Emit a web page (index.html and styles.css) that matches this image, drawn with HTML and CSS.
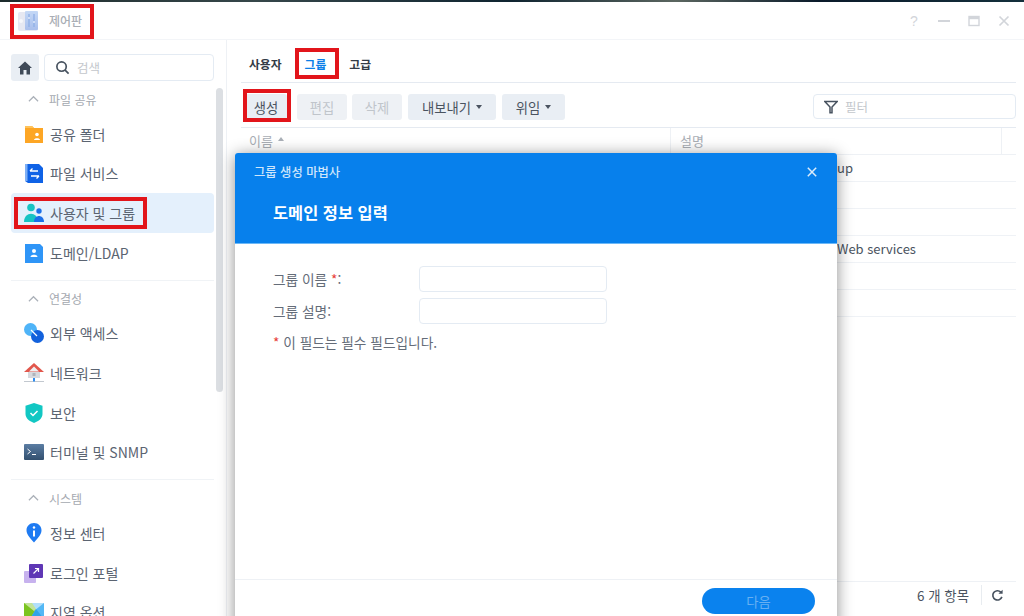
FILE: index.html
```html
<!DOCTYPE html>
<html lang="ko">
<head>
<meta charset="utf-8">
<title>제어판</title>
<link rel="stylesheet" href="styles.css">
</head>
<body>
<div class="desktop-strip"></div>
<div class="window">
  <header class="titlebar">
    <div class="app-title">
      <svg class="app-icon" viewBox="0 0 22 22"><defs><linearGradient id="ti" x1="0" y1="0" x2="0" y2="1"><stop offset="0" stop-color="#c4d8f6"/><stop offset="1" stop-color="#a9bfec"/></linearGradient></defs><rect x="1" y="2" width="20" height="19" rx="2" fill="#e6e8f2"/><rect x="8" y="1" width="13" height="19" rx="1" fill="url(#ti)"/><path d="M12 4v13M17 4v13" stroke="#8fb0e6" stroke-width="1.300"/><path d="M11 8h2M16 12h2" stroke="#dfe9fa" stroke-width="1.300"/><circle cx="4" cy="11" r="2" fill="#f6f7fb"/></svg>
      <span>제어판</span>
    </div>
    <div class="win-controls">
      <span class="win-help">?</span>
      <svg viewBox="0 0 12 12"><path d="M0 6h12" stroke="#d2d5da" stroke-width="2"/></svg>
      <svg viewBox="0 0 12 12"><rect x="1" y="1.500" width="10" height="9" fill="none" stroke="#d2d5da" stroke-width="1.400"/><path d="M1 3h10" stroke="#d2d5da" stroke-width="2.400"/></svg>
      <svg viewBox="0 0 12 12"><path d="M1.500 1.500l9 9M10.500 1.500l-9 9" stroke="#d2d5da" stroke-width="1.700"/></svg>
    </div>
  </header>
  <div class="main">
    <aside class="sidebar">
      <div class="search-row">
        <button class="home-btn"><svg viewBox="0 0 16 16"><path d="M8 1.500L1 8h2v6.500h3.500V10h3v4.500H13V8h2z" fill="#3f4a58"/></svg></button>
        <div class="search-box">
          <svg viewBox="0 0 16 16"><circle cx="7" cy="7" r="5" fill="none" stroke="#47525f" stroke-width="1.800"/><path d="M10.500 10.500l4 4" stroke="#47525f" stroke-width="1.800"/></svg>
          <span>검색</span>
        </div>
      </div>
      <div class="scrollbar"></div>
      <section class="group">
        <div class="group-head"><svg viewBox="0 0 12 8"><path d="M1 6.500l5-5 5 5" fill="none" stroke="#aab0b8" stroke-width="1.300"/></svg><span>파일 공유</span></div>
        <div class="item"><svg viewBox="0 0 20 20"><path d="M1 2h7l2 2h9v15H1z" fill="#fda625"/><path d="M1 2h7l2 2H1z" fill="#ffc35a"/><circle cx="13" cy="10.500" r="1.800" fill="#fff"/><path d="M10 16c0-2.500 6-2.500 6 0z" fill="#fff"/></svg><span>공유 폴더</span></div>
        <div class="item"><svg viewBox="0 0 20 20"><path d="M1 1h14l4 4v15H4l-3-2z" fill="#0f62e6"/><path d="M1 1h2.500v17H1z" fill="#7fb0f5"/><path d="M6 8h8M6 8l2.500-2.500M15 13H7M15 13l-2.500 2.500" stroke="#fff" stroke-width="1.400" fill="none"/></svg><span>파일 서비스</span></div>
        <div class="item selected"><svg viewBox="0 0 20 20"><circle cx="7" cy="4.500" r="3.800" fill="#17c3c3"/><path d="M0 19c0-11 14-11 14 0z" fill="#17c3c3"/><circle cx="15" cy="8" r="2.700" fill="#1a6fe8"/><path d="M10 19c0-8 10-8 10 0z" fill="#1a6fe8"/></svg><span>사용자 및 그룹</span></div>
        <div class="item"><svg viewBox="0 0 20 20"><path d="M1 1h15l3 3v16H1z" fill="#2f95f7"/><circle cx="10" cy="8" r="2" fill="#fff"/><path d="M6.500 14c0-3 7-3 7 0z" fill="#fff"/></svg><span>도메인/LDAP</span></div>
      </section>
      <section class="group">
        <div class="group-head"><svg viewBox="0 0 12 8"><path d="M1 6.500l5-5 5 5" fill="none" stroke="#aab0b8" stroke-width="1.300"/></svg><span>연결성</span></div>
        <div class="item"><svg viewBox="0 0 20 20"><circle cx="6.500" cy="6.500" r="6.500" fill="#4fb4f8"/><circle cx="13.500" cy="13.500" r="6.500" fill="#1261dc"/><path d="M7 7l6 6" stroke="#fff" stroke-width="1.300"/></svg><span>외부 액세스</span></div>
        <div class="item"><svg viewBox="0 0 20 20"><path d="M4 8h12v7H4z" fill="#d6d9de"/><path d="M10 0L0 9h20z" fill="#e2574c"/><path d="M10 3.500L5 8.500h10z" fill="#f0f1f3"/><rect x="8.500" y="10" width="3" height="3" fill="#aeb4bc"/><path d="M0 18.500h20" stroke="#c2c8cf" stroke-width="1"/><path d="M10 15v3.500" stroke="#2f8df0" stroke-width="2"/></svg><span>네트워크</span></div>
        <div class="item"><svg viewBox="0 0 20 20"><path d="M10 0l8.500 2.800v8.200c0 4.500-4.500 7.500-8.500 9-4-1.500-8.500-4.500-8.500-9V2.800z" fill="#12c7c3"/><path d="M6.500 10l2.500 2.500 4.500-4.500" fill="none" stroke="#fff" stroke-width="1.500"/></svg><span>보안</span></div>
        <div class="item"><svg viewBox="0 0 20 20"><defs><linearGradient id="term" x1="0" y1="0" x2="0" y2="1"><stop offset="0" stop-color="#5b7da3"/><stop offset="1" stop-color="#33506f"/></linearGradient></defs><rect y="2" width="20" height="16" rx="1" fill="url(#term)"/><path d="M3.500 7l3 2.500-3 2.500M8 12.500h4" fill="none" stroke="#fff" stroke-width="1"/></svg><span>터미널 및 SNMP</span></div>
      </section>
      <section class="group">
        <div class="group-head"><svg viewBox="0 0 12 8"><path d="M1 6.500l5-5 5 5" fill="none" stroke="#aab0b8" stroke-width="1.300"/></svg><span>시스템</span></div>
        <div class="item"><svg viewBox="0 0 20 20"><path d="M10 0c4.500 0 7.500 3.300 7.500 7.300 0 4.500-4 8-7.500 12.200C6.500 15.300 2.500 11.800 2.500 7.300 2.500 3.300 5.500 0 10 0z" fill="#1f7bf2"/><circle cx="10" cy="4.500" r="1.200" fill="#fff"/><path d="M10 7.500v6" stroke="#fff" stroke-width="2"/></svg><span>정보 센터</span></div>
        <div class="item"><svg viewBox="0 0 20 20"><rect x="0" y="8" width="12" height="12" rx="1" fill="#c7b2ee"/><rect x="5" y="1" width="14" height="14" rx="1" fill="#5f37b5"/><path d="M9.500 10.500l5-5M11 5.500h3.500V9" fill="none" stroke="#fff" stroke-width="1.200"/></svg><span>로그인 포털</span></div>
        <div class="item"><svg viewBox="0 0 20 20"><rect y="1" width="20" height="16" fill="#53b8f5"/><path d="M0 1h8l4 6-6 10H0z" fill="#7bc41f"/><path d="M0 1h20L10 9z" fill="#fff" opacity=".55"/><path d="M12 7l8 10H6z" fill="#2fa3e8"/></svg><span>지역 옵션</span></div>
      </section>
    </aside>
    <main class="content">
      <nav class="tabs">
        <span class="tab">사용자</span>
        <span class="tab active">그룹</span>
        <span class="tab">고급</span>
      </nav>
      <div class="toolbar">
        <button class="btn create">생성</button>
        <button class="btn disabled w-edit">편집</button>
        <button class="btn disabled w-edit">삭제</button>
        <button class="btn w-export">내보내기<i class="caret"></i></button>
        <button class="btn w-delegate">위임<i class="caret"></i></button>
        <div class="filter">
          <svg viewBox="0 0 14 14"><path d="M.8 1.500h12.400L8 7v5.800H6V7z" fill="none" stroke="#47525f" stroke-width="1.500"/></svg>
          <span>필터</span>
        </div>
      </div>
      <div class="table">
        <div class="thead">
          <div class="th name">이름<i class="caret up"></i></div>
          <div class="th desc">설명</div>
          <div class="th end"></div>
        </div>
        <div class="row"><span class="clipped">up</span></div>
        <div class="row"></div>
        <div class="row"></div>
        <div class="row"><span class="clipped">Web services</span></div>
        <div class="row"></div>
        <div class="row"></div>
      </div>
      <div class="pager">
        <span>6 개 항목</span>
        <svg viewBox="0 0 14 14"><path d="M11.700 8.500A5 5 0 1 1 10.500 3.300" fill="none" stroke="#47525f" stroke-width="1.800"/><path d="M12.500 .8v4.400H8z" fill="#47525f"/></svg>
      </div>
    </main>
  </div>
</div>

<section class="modal">
  <header class="modal-head">
    <div class="modal-top">
      <span>그룹 생성 마법사</span>
      <svg viewBox="0 0 10 10"><path d="M.8.8l8.400 8.400M9.200.8L.8 9.200" stroke="#dcecfb" stroke-width="1.500"/></svg>
    </div>
    <h1>도메인 정보 입력</h1>
  </header>
  <div class="modal-body">
    <div class="field"><label>그룹 이름 <em>*</em>:</label><div class="input"></div></div>
    <div class="field"><label>그룹 설명:</label><div class="input"></div></div>
    <p class="note"><em>*</em> 이 필드는 필수 필드입니다.</p>
  </div>
  <footer class="modal-foot"><button class="next">다음</button></footer>
</section>

<div class="mark m-title"></div>
<div class="mark m-tab"></div>
<div class="mark m-create"></div>
<div class="mark m-user"></div>
</body>
</html>
```
FILE: styles.css
```css
* { box-sizing: border-box; }
html, body { margin: 0; height: 616px; overflow: hidden; }
body {
  position: relative;
  background: #fff;
  color: #4a5360;
  font-family: "Noto Sans CJK KR", "Noto Sans", sans-serif;
  font-size: 13px;
}
.desktop-strip {
  height: 2px;
  background: linear-gradient(90deg, #1d2b2c 0, #36474a 25%, #0f2430 50%, #5b6660 66%, #0a1a2a 80%, #14303c 100%);
}
.window { height: 614px; display: flex; flex-direction: column; }
.titlebar {
  height: 38px;
  flex: none;
  border-bottom: 1px solid #f3f5f8;
  display: flex;
  align-items: center;
  justify-content: space-between;
  padding: 0 14px 0 17px;
}
.app-title { display: flex; align-items: center; gap: 10px; color: #a9aeb5; font-size: 12px; font-weight: 500; }
.app-icon { width: 22px; height: 22px; }
.win-controls { display: flex; align-items: center; gap: 18px; }
.win-controls svg { width: 12px; height: 12px; }
.win-help { width: 12px; text-align: center; color: #d2d5da; font: 14px "Liberation Sans", sans-serif; }
.main { flex: 1; display: flex; min-height: 0; }
.sidebar {
  width: 227px;
  flex: none;
  position: relative;
  overflow: hidden;
  padding: 14px 12px 0 11px;
  border-right: 1px solid #eef1f5;
}
.search-row { display: flex; gap: 5px; height: 27px; }
.home-btn {
  width: 28px; height: 27px; padding: 0; border: 0; border-radius: 3px;
  background: #e9eef4; display: flex; align-items: center; justify-content: center;
}
.home-btn svg { width: 16px; height: 16px; }
.search-box {
  flex: 1;
  border: 1px solid #e4ebf3;
  border-radius: 4px;
  display: flex; align-items: center; gap: 7px;
  padding-left: 10px;
  color: #c3c7cc;
  font-size: 12.500px;
}
.search-box svg { width: 15px; height: 15px; }
.scrollbar {
  position: absolute; left: 216px; top: 48px; width: 7px; height: 304px;
  background: #dcdfe3; border-radius: 4px;
}
.group { border-bottom: 1px solid #f0f3f6; padding-bottom: 7px; }
.group:last-child { border-bottom: 0; }
.group-head {
  height: 33px;
  display: flex; align-items: center; gap: 10px;
  padding: 3px 0 0 17px;
  color: #a4a9b0;
  font-size: 12px;
}
.group-head svg { width: 11px; height: 8px; }
.item {
  width: 203px;
  height: 39.670px;
  display: flex; align-items: center; gap: 6px;
  padding-left: 13px;
  border-radius: 4px;
  color: #5b6471;
  font-size: 14px;
}
.item svg { width: 20px; height: 20px; flex: none; }
.selected { background: #e4f0fc; }
.content { flex: 1; min-width: 0; padding: 0 8px 0 14px; display: flex; flex-direction: column; }
.tabs {
  height: 43px;
  flex: none;
  display: flex; align-items: center; gap: 23px;
  padding: 4px 0 0 8px;
  border-bottom: 1px solid #e5eaf1;
  font-size: 11.800px;
  font-weight: 700;
  color: #333b46;
}
.active { color: #0a7fe8; }
.toolbar {
  height: 45px;
  flex: none;
  display: flex; align-items: flex-start; gap: 5px;
  padding: 11px 0 7px 4px;
  border-bottom: 1px solid #e5eaf1;
}
.btn {
  height: 26px;
  padding: 0;
  border: 0; border-radius: 3px;
  background: #e9eef4;
  color: #4a5360;
  font: inherit;
  font-size: 13.300px;
  display: flex; align-items: center; justify-content: center;
}
.create { width: 42px; margin-right: 5px; }
.w-edit { width: 50px; }
.w-export { width: 88px; margin-left: 1px; }
.w-delegate { width: 63px; margin-left: 1px; }
.disabled { background: #eef1f5; color: #c0c5cb; }
.caret {
  display: inline-block; width: 0; height: 0; margin-left: 5px;
  border-left: 3.500px solid transparent; border-right: 3.500px solid transparent;
  border-top: 4px solid #4a5360;
}
.caret.up { border-top: 0; border-bottom: 4px solid #aab0b8; position: relative; top: -1px; }
.filter {
  margin-left: auto;
  width: 203px; height: 25px;
  border: 1px solid #e4ebf3; border-radius: 4px;
  display: flex; align-items: center; gap: 7px;
  padding-left: 10px;
  color: #c3c7cc;
  font-size: 12.500px;
}
.filter svg { width: 14px; height: 14px; }
.table { flex: 1; display: flex; flex-direction: column; }
.thead { height: 27px; flex: none; display: flex; border-bottom: 1px solid #eef1f5; color: #a9aeb5; font-size: 13px; }
.th { display: flex; align-items: center; padding: 0 0 2px 8px; }
.name { width: 430px; border-right: 1px solid #eef1f5; }
.desc { width: 331px; padding-left: 9px; border-right: 1px solid #eef1f5; }
.end { flex: 1; }
.row {
  height: 27px; flex: none;
  display: flex; align-items: center;
  border-bottom: 1px solid #eff2f6;
  padding: 0 0 2px 596px;
  font-size: 13px;
  color: #4a5360;
}
.clipped { white-space: nowrap; }
.pager {
  height: 35px; flex: none;
  border-top: 1px solid #eef1f5;
  display: flex; align-items: center; justify-content: flex-end;
  gap: 9px;
  padding: 0 12px 8px 0;
  font-size: 13.400px;
}
.pager svg { width: 13px; height: 13px; }
.pager span { padding-right: 12px; border-right: 1px solid #e8ecf0; line-height: 20px; }
.modal {
  position: absolute;
  left: 235px; top: 153px;
  width: 602px; height: 480px;
  background: #fff;
  border-radius: 3px 3px 0 0;
  box-shadow: 0 2px 16px rgba(0, 0, 0, .45);
  display: flex; flex-direction: column;
}
.modal-head {
  height: 91px; flex: none;
  background: #0780ec;
  border-bottom: 1px solid #6cb8f7;
  border-radius: 3px 3px 0 0;
  padding: 0 20px 0 19px;
  color: #fff;
}
.modal-top {
  height: 37px;
  display: flex; align-items: center; justify-content: space-between;
  color: #cfe6fb;
  font-size: 12.300px;
  font-weight: 500;
}
.modal-top svg { width: 10px; height: 10px; }
.modal-head h1 { margin: 7px 0 0 19px; font-size: 16.400px; line-height: 30px; font-weight: 700; }
.modal-body { flex: 1; padding: 22px 38px 0; font-size: 13.700px; color: #646c78; }
.field { display: flex; align-items: center; height: 26px; margin-bottom: 6px; }
.field label { width: 146px; }
em { color: #e8403a; font-style: normal; }
.input { width: 188px; height: 26px; border: 1px solid #e4ebf3; border-radius: 4px; }
.note { margin: 8px 0 0; line-height: 20px; }
.modal-foot {
  height: 64px; flex: none;
  border-top: 1px solid #eef1f5;
  padding: 8px 22px 0 0;
  display: flex; justify-content: flex-end; align-items: flex-start;
  position: absolute; left: 0; right: 0; top: 426px;
}
.next {
  width: 113px; height: 26px; border: 0; border-radius: 13px;
  background: #0a82ee; color: #68b0f2; font: inherit; font-size: 13.300px;
}
.mark { position: absolute; border: 4px solid #e2151b; pointer-events: none; }
.m-title { left: 10px; top: 4px; width: 84px; height: 35px; }
.m-tab { left: 295px; top: 48px; width: 44px; height: 31px; }
.m-create { left: 243px; top: 89px; width: 48px; height: 33px; }
.m-user { left: 14px; top: 197px; width: 133px; height: 32px; }
```
